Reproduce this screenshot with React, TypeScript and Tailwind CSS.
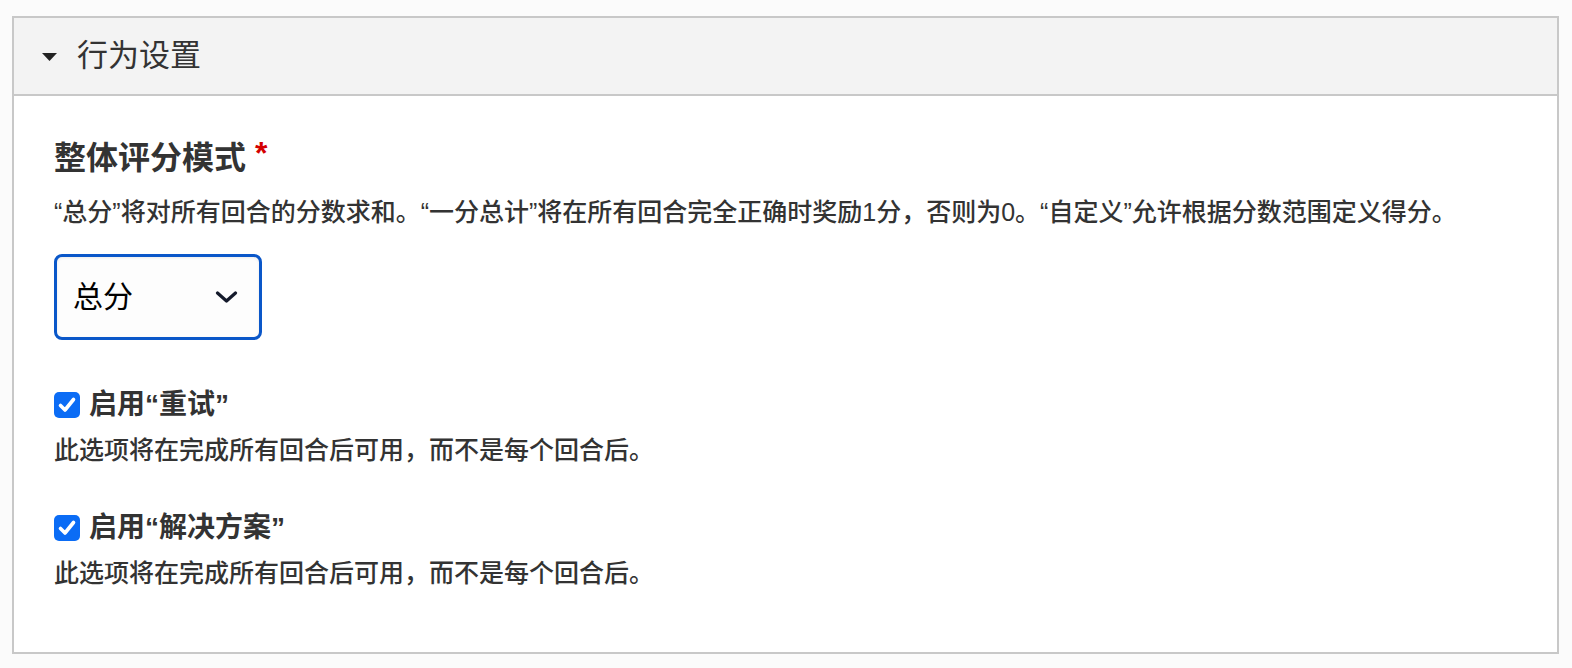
import { useState } from 'react';

const FONT = "font-['Liberation_Sans','Noto_Sans_CJK_SC',sans-serif]";

interface OptionProps {
  label: string;
  hint: string;
  checked: boolean;
  onToggle: () => void;
  className?: string;
}

function CheckOption({ label, hint, checked, onToggle, className }: OptionProps) {
  return (
    <div className={className}>
      <label className="flex items-center gap-[9px] h-[36px] cursor-pointer" onClick={onToggle}>
        <span
          className={`flex items-center justify-center w-[26px] h-[26px] rounded-[5px] ${
            checked ? 'bg-[#0b6cf5]' : 'bg-white border-2 border-[#767676]'
          }`}
        >
          {checked && (
            <svg width="20" height="20" viewBox="0 0 20 20">
              <polyline
                points="3.5,10.5 8,15 16.5,4.5"
                fill="none"
                stroke="white"
                strokeWidth="3.6"
                strokeLinecap="round"
                strokeLinejoin="round"
              />
            </svg>
          )}
        </span>
        <span className="text-[28px] leading-[36px] font-bold text-[#333]">{label}</span>
      </label>
      <p className="mt-[10px] text-[25px] leading-[34px] font-medium text-[#333]">{hint}</p>
    </div>
  );
}

export default function App() {
  const [open, setOpen] = useState(true);
  const [retry, setRetry] = useState(true);
  const [solution, setSolution] = useState(true);

  const hint = '此选项将在完成所有回合后可用，而不是每个回合后。';

  return (
    <div className={`min-h-[668px] bg-[#fbfbfb] pt-[16px] pl-[12px] pr-[13px] pb-[16px] ${FONT}`}>
      <div className="border-2 border-[#c8c8c8] bg-white">
        {/* Header */}
        <button
          onClick={() => setOpen(!open)}
          className="flex items-center w-full h-[78px] bg-[#f3f3f3] border-b-2 border-[#c8c8c8] pl-[28px] text-left"
        >
          <svg width="15" height="8" viewBox="0 0 15 8" className="mt-[2px]">
            <polygon points="0,0 15,0 7.5,8" fill="#222" />
          </svg>
          <span className="ml-[20px] text-[31px] leading-[40px] text-[#333]">行为设置</span>
        </button>

        {/* Body */}
        {open && (
          <div className="pl-[40px] pr-[40px] pt-[42px] pb-[62px]">
            <div className="flex items-start h-[40px]">
              <span className="text-[32px] leading-[40px] font-bold text-[#333]">整体评分模式</span>
              <span className="ml-[9px] text-[32px] leading-[30px] font-bold text-[#d40000]">*</span>
            </div>

            <p className="mt-[16px] text-[25px] leading-[36px] font-medium text-[#333] whitespace-nowrap">
              “总分”将对所有回合的分数求和。“一分总计”将在所有回合完全正确时奖励1分，否则为0。“自定义”允许根据分数范围定义得分。
            </p>

            <div className="mt-[24px] flex items-center justify-between w-[208px] h-[86px] border-[3px] border-[#0a57c9] rounded-[8px] bg-[#fdfdfd] pl-[16px] pr-[21px] shadow-[inset_0_1px_3px_rgba(0,0,0,0.08)]">
              <span className="text-[30px] leading-[36px] text-black">总分</span>
              <svg width="23" height="12" viewBox="0 0 23 12">
                <polyline
                  points="2.5,2 11.5,10 20.5,2"
                  fill="none"
                  stroke="#141a2b"
                  strokeWidth="3.2"
                  strokeLinecap="round"
                  strokeLinejoin="round"
                />
              </svg>
            </div>

            <CheckOption
              className="mt-[47px]"
              label="启用“重试”"
              hint={hint}
              checked={retry}
              onToggle={() => setRetry(!retry)}
            />
            <CheckOption
              className="mt-[43px]"
              label="启用“解决方案”"
              hint={hint}
              checked={solution}
              onToggle={() => setSolution(!solution)}
            />
          </div>
        )}
      </div>
    </div>
  );
}
